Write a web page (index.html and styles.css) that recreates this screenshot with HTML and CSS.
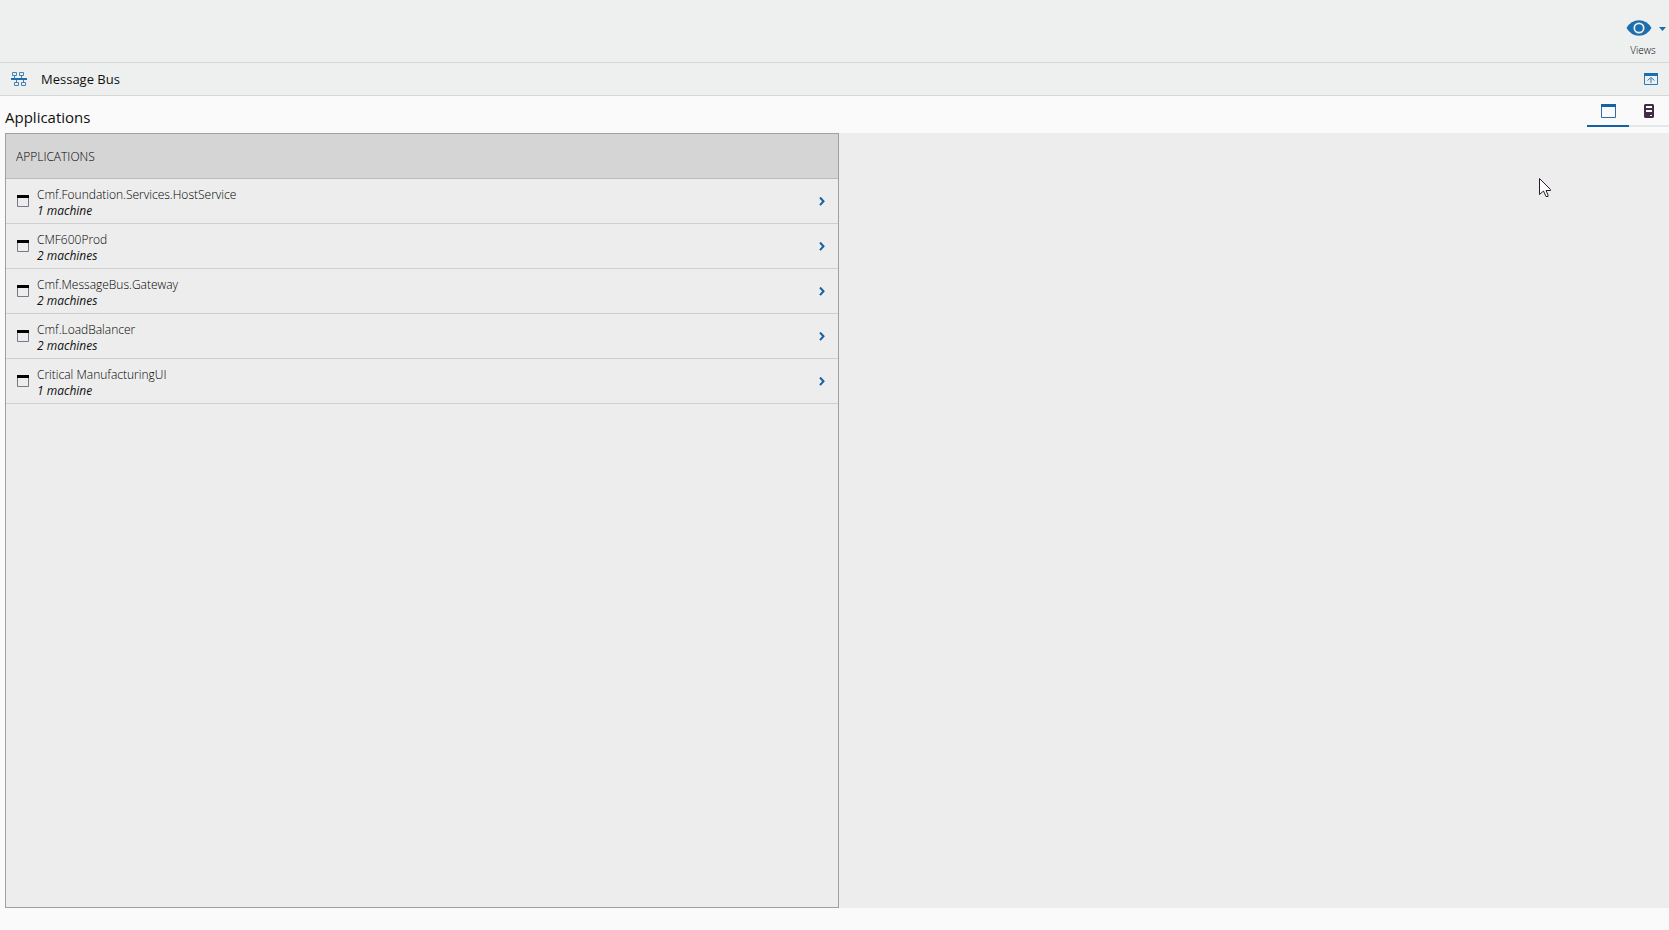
FILE: index.html
```html
<!DOCTYPE html>
<html lang="en">
  <head>
    <meta charset="UTF-8" />
    <meta name="viewport" content="width=device-width, initial-scale=1.0" />
    <title>Message Bus</title>
    <link rel="stylesheet" href="styles.css">
  </head>
  <body>
    <header class="toolbar">
      <button type="button" class="views-btn">
        <span class="views-icons">
          <svg width="26" height="16" viewBox="0 0 26 16">
            <path fill="#1c6ead" d="M0.500 8 Q5 0.300 13 0.300 Q21 0.300 25.500 8 Q21 15.700 13 15.700 Q5 15.700 0.500 8 Z" />
            <circle cx="13" cy="8" r="4.700" fill="none" stroke="#eef0f0" stroke-width="1.700" />
          </svg>
          <svg width="7" height="6" viewBox="0 0 7 6">
            <path fill="#1c6ead" d="M0 2H7L3.500 6Z" />
          </svg>
        </span>
        <span class="views-label">Views</span>
      </button>
    </header>

    <div class="page-bar">
      <svg class="bus-icon" width="16" height="15" viewBox="0 0 16 15">
        <path fill="#1c6ead" d="M0 6H16V8H0Z" />
        <path fill="none" stroke="#4a7fb5" d="M1.500 0.500H5.500V3.500H1.500ZM8.500 0.500H12.500V3.500H8.500ZM3.500 10.500H7.500V13.500H3.500ZM10.500 10.500H14.500V13.500H10.500ZM3.500 3.500V6M10.500 3.500V6M5.500 8V10.500M12.500 8V10.500" />
      </svg>
      <h1>Message Bus</h1>
      <button type="button" class="popout-btn" aria-label="Open in window">
        <svg width="14" height="12" viewBox="0 0 14 12">
          <path fill="#1c6ead" d="M0 0H14V3H0Z" />
          <path fill="none" stroke="#2f7ab5" d="M0.500 2.500V11.500H13.500V2.500M7 10V5M3.500 7.500L7 4.500L10.500 7.500" />
        </svg>
      </button>
    </div>

    <main>
      <div class="section-head">
        <h2>Applications</h2>
        <nav class="tabs">
          <button type="button" class="tab active" aria-label="Applications">
            <svg width="15" height="14" viewBox="0 0 15 14">
              <path fill="none" stroke="#2b6ca8" d="M0.500 0.500H14.500V13.500H0.500Z" />
              <path fill="#1661a3" d="M0 0H15V3H0Z" />
            </svg>
          </button>
          <button type="button" class="tab" aria-label="Machines">
            <svg width="10" height="14" viewBox="0 0 10 14">
              <path fill="#432c48" d="M1 0H9L10 1V13L9 14H1L0 13V1Z" />
              <path fill="#fafafa" d="M2 2H8V4H2ZM2 6H8V8H2ZM6 11H8V12H6Z" />
            </svg>
          </button>
        </nav>
      </div>

      <div class="content">
        <section class="list-panel">
          <h3>APPLICATIONS</h3>
          <ul>
            <li>
              <button type="button" class="item">
                <svg class="app-icon" width="12" height="12" viewBox="0 0 12 12"><use href="#window" /></svg>
                <span class="item-text"><span class="name">Cmf.Foundation.Services.HostService</span><em>1 machine</em></span>
                <svg width="6" height="9" viewBox="0 0 6 9"><use href="#chevron" /></svg>
              </button>
            </li>
            <li>
              <button type="button" class="item">
                <svg class="app-icon" width="12" height="12" viewBox="0 0 12 12"><use href="#window" /></svg>
                <span class="item-text"><span class="name">CMF600Prod</span><em>2 machines</em></span>
                <svg width="6" height="9" viewBox="0 0 6 9"><use href="#chevron" /></svg>
              </button>
            </li>
            <li>
              <button type="button" class="item">
                <svg class="app-icon" width="12" height="12" viewBox="0 0 12 12"><use href="#window" /></svg>
                <span class="item-text"><span class="name">Cmf.MessageBus.Gateway</span><em>2 machines</em></span>
                <svg width="6" height="9" viewBox="0 0 6 9"><use href="#chevron" /></svg>
              </button>
            </li>
            <li>
              <button type="button" class="item">
                <svg class="app-icon" width="12" height="12" viewBox="0 0 12 12"><use href="#window" /></svg>
                <span class="item-text"><span class="name">Cmf.LoadBalancer</span><em>2 machines</em></span>
                <svg width="6" height="9" viewBox="0 0 6 9"><use href="#chevron" /></svg>
              </button>
            </li>
            <li>
              <button type="button" class="item">
                <svg class="app-icon" width="12" height="12" viewBox="0 0 12 12"><use href="#window" /></svg>
                <span class="item-text"><span class="name">Critical ManufacturingUI</span><em>1 machine</em></span>
                <svg width="6" height="9" viewBox="0 0 6 9"><use href="#chevron" /></svg>
              </button>
            </li>
          </ul>
        </section>
        <section class="detail-panel">
          <svg class="pointer" width="12" height="19" viewBox="0 0 12 19">
            <path fill="#fff" stroke="#2a1c2c" d="M0.500 0.500V16.500L4.500 13L7 18.500H9V17L7 12.500H11.500V11.500Z" />
          </svg>
        </section>
      </div>
    </main>

    <!-- shared list icons -->
    <svg class="sprite" width="0" height="0">
      <symbol id="window" viewBox="0 0 12 12">
        <path fill="none" stroke="#777a85" d="M0.500 0.500H11.500V11.500H0.500Z" />
        <path fill="#000" d="M0 0H12V3H0Z" />
      </symbol>
      <symbol id="chevron" viewBox="0 0 6 9">
        <path fill="none" stroke="#1661a3" stroke-width="2" d="M1 0.500L4.500 4.300L1 8.100" />
      </symbol>
    </svg>
  </body>
</html>
```
FILE: styles.css
```css
* {
  margin: 0;
  padding: 0;
  box-sizing: border-box;
}

body {
  font-family: "Open Sans", "Noto Sans", sans-serif;
  font-size: 12px;
  color: #111;
  background: #fafafa;
  min-height: 100vh;
  display: flex;
  flex-direction: column;
}

button {
  font: inherit;
  color: inherit;
  background: none;
  border: none;
  cursor: pointer;
}

svg {
  display: block;
  flex-shrink: 0;
}

.toolbar {
  display: flex;
  justify-content: flex-end;
  height: 63px;
  padding: 20px 3px 0 0;
  background: #eef0f0;
  border-bottom: 1px solid #d5d7d7;
}

.views-btn {
  display: flex;
  flex-direction: column;
  align-items: center;
  height: 36px;
  gap: 6px;
}

.views-icons {
  display: flex;
  align-items: center;
  gap: 7px;
}

.views-label {
  font-size: 10px;
  line-height: 16px;
  font-weight: 300;
  color: #000;
  padding-right: 6px;
}

.page-bar {
  display: flex;
  align-items: center;
  height: 33px;
  padding: 0 11px;
  background: #eef0f0;
  border-bottom: 1px solid #d5d7d7;
}

.page-bar h1 {
  font-size: 13px;
  font-weight: 400;
  margin-left: 14px;
}

.popout-btn {
  margin-left: auto;
}

main {
  flex: 1;
  display: flex;
  flex-direction: column;
  padding-bottom: 22px;
}

.section-head {
  display: flex;
  justify-content: space-between;
  height: 37px;
  padding-left: 5px;
}

.section-head h2 {
  font-size: 15px;
  line-height: 20px;
  font-weight: 400;
  margin-top: 11px;
}

.tabs {
  display: flex;
  height: 31px;
}

.tab {
  display: flex;
  justify-content: center;
  align-items: center;
  width: 40px;
  border-bottom: 2px solid #e4e8e8;
}

.tab.active {
  width: 42px;
  border-bottom-color: #1661a3;
}

.content {
  flex: 1;
  display: flex;
}

.list-panel {
  width: calc(50% - 1px);
  margin-left: 5px;
  background: #ededed;
  border: 1px solid #a0a0a0;
}

.list-panel h3 {
  height: 45px;
  padding-left: 10px;
  font-size: 12px;
  line-height: 46px;
  font-weight: 300;
  color: #000;
  background: #d5d5d5;
  border-bottom: 1px solid #bbb;
}

.list-panel ul {
  list-style: none;
}

.item {
  display: flex;
  align-items: center;
  width: 100%;
  height: 45px;
  padding: 0 13px 0 11px;
  text-align: left;
  line-height: 16px;
  border-bottom: 1px solid #d0d0d0;
}

.item-text {
  flex: 1;
  display: flex;
  flex-direction: column;
  margin-left: 8px;
  padding-top: 4px;
}

.name {
  font-weight: 300;
  color: #000;
}

.detail-panel {
  flex: 1;
  position: relative;
  background: #ededed;
}

/* mouse pointer over the empty panel */
.pointer {
  position: absolute;
  top: 45px;
  right: 118px;
}

.sprite {
  position: absolute;
}
```
